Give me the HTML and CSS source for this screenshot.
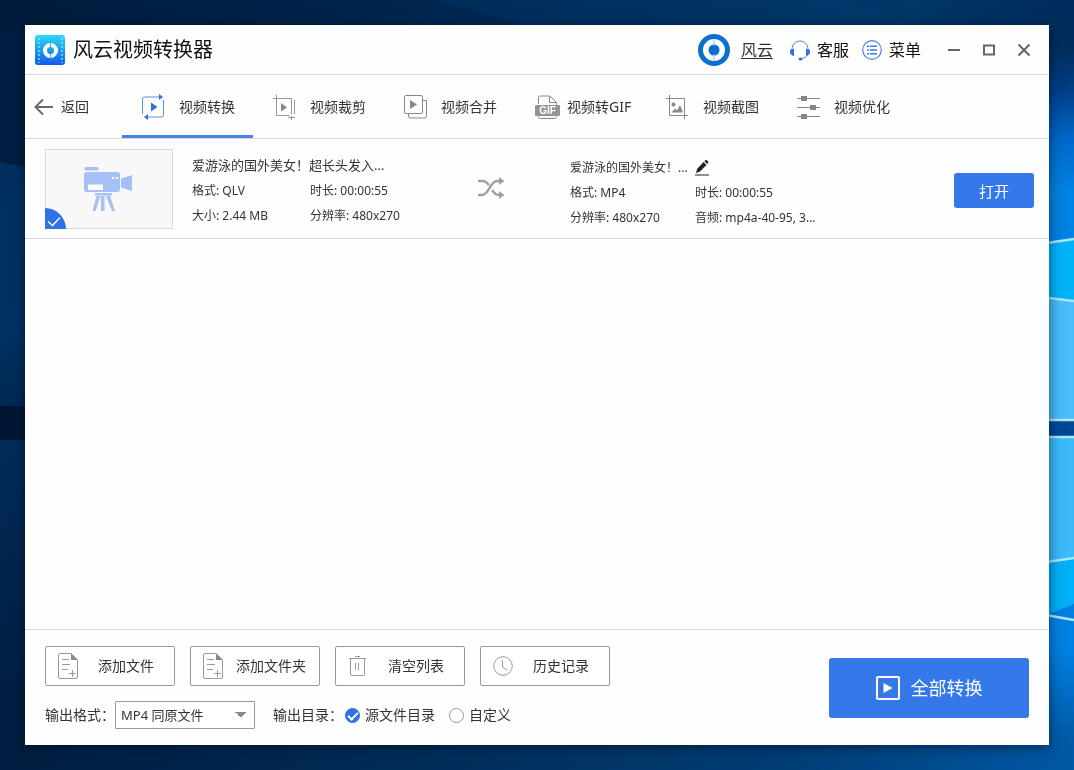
FILE: index.html
```html
<!DOCTYPE html>
<html lang="zh-CN">
<head>
<meta charset="utf-8">
<meta name="viewport" content="width=device-width, initial-scale=1">
<title>风云视频转换器</title>
<link rel="stylesheet" href="styles.css">
</head>
<body>
<svg class="wallpaper" viewBox="0 0 1074 770" preserveAspectRatio="none" aria-hidden="true">
  <defs>
    <linearGradient id="top" x1="0" x2="1" y1="0" y2="0"><stop offset="0" stop-color="#001b3b"/><stop offset=".3" stop-color="#00234a"/><stop offset=".85" stop-color="#003668"/><stop offset="1" stop-color="#002c5c"/></linearGradient>
    <linearGradient id="right" x1="0" x2="0" y1="0" y2="1"><stop offset="0" stop-color="#002c5c"/><stop offset=".06" stop-color="#002c5c"/><stop offset=".12" stop-color="#004088"/><stop offset=".18" stop-color="#0068c8"/><stop offset=".25" stop-color="#0083e2"/><stop offset=".84" stop-color="#0081e4"/><stop offset=".96" stop-color="#0059a6"/><stop offset="1" stop-color="#0059a6"/></linearGradient>
    <linearGradient id="left" x1="0" x2="0" y1="0" y2="1"><stop offset="0" stop-color="#003060"/><stop offset=".7" stop-color="#003264"/><stop offset="1" stop-color="#002852"/></linearGradient>
    <linearGradient id="low" x1="0" x2="0" y1="0" y2="1"><stop offset="0" stop-color="#002c59"/><stop offset="1" stop-color="#001f42"/></linearGradient>
    <linearGradient id="base" x1="0" x2="1" y1="0" y2="0"><stop offset="0" stop-color="#001d3f"/><stop offset=".4" stop-color="#002d59"/><stop offset=".75" stop-color="#003f78"/><stop offset="1" stop-color="#0059a6"/></linearGradient>
  </defs>
  <path fill="#001d3f" d="M0 0h1074v770H0z"/>
  <path fill="url(#left)" d="M0 162l40 8v236H0z"/>
  <path fill="#001733" d="M0 406h40v34H0z"/>
  <path fill="url(#low)" d="M0 440h40v250L0 682z"/>
  <path fill="url(#right)" d="M1040 0h34v770h-34z"/>
  <path fill="#00b3f8" d="M1040 244l34-5v62l-34-4z"/>
  <path fill="#48bdfa" d="M1040 297l34 4v119h-34z"/>
  <path fill="#004894" d="M1040 421h34v15h-34z"/>
  <path fill="#3cbafa" d="M1040 437h34v121l-34 5z"/>
  <path fill="#00b0f8" d="M1040 563l34-5v62l-34-5z"/>
  <path fill="#007fe0" d="M1049 614l25-10v16z"/>
  <path fill="none" stroke="#a9e8ff" stroke-width="2.500" d="M1040 244l34-5M1040 297l34 4M1040 420h34M1040 437h34M1040 563l34-5M1040 614l34 6"/>
  <path fill="url(#top)" d="M0 0h1074v30H0z"/>
  <path fill="#004078" opacity=".25" d="M435 0h420l60 26H530z"/>
  <path fill="url(#base)" d="M0 742h1074v28H0z"/>
</svg>

<main class="window">
  <header class="titlebar">
    <svg class="app-logo" viewBox="0 0 30 30" aria-hidden="true">
      <defs><linearGradient id="logo" x1="0" x2="0" y1="0" y2="1"><stop stop-color="#2fd7f6"/><stop offset=".5" stop-color="#1a9df2"/><stop offset="1" stop-color="#1557e8"/></linearGradient></defs>
      <rect width="30" height="30" rx="3" fill="url(#logo)"/>
      <path stroke="#8be6ff" stroke-width="2" stroke-dasharray="2 2" opacity=".7" d="M4 3v25M27 3v25"/>
      <circle cx="15.500" cy="15.500" r="5.500" fill="none" stroke="#fff" stroke-width="4"/>
      <path stroke="#3fa8f5" d="M15.500 7v5M15.500 19v5"/>
    </svg>
    <h1 class="app-title">风云视频转换器</h1>
    <a class="account" href="#">
      <svg class="icon-account" viewBox="0 0 32 32" aria-hidden="true"><circle cx="16" cy="16" r="13.500" fill="#fff" stroke="#0b6fd0" stroke-width="5"/><circle cx="16" cy="16" r="5.500" fill="#0b6fd0"/><path stroke="#8dbbe8" d="M16 5v7M16 20v7"/></svg>
      <span>风云</span>
    </a>
    <button class="title-button" type="button">
      <svg class="icon-small" viewBox="0 0 20 20" aria-hidden="true"><path d="M2 12V9a8 8 0 0 1 16 0v3c0 4-3 6-7 7" fill="none" stroke="#4a83ee"/><path d="M0 10q1-1 4-1v7Q0 15 0 12zM20 10q-1-1-4-1v7q4-1 4-4z" fill="#2f6fe8"/><ellipse cx="10.500" cy="19" rx="2" ry="1.500" fill="#2f6fe8"/></svg>
      客服
    </button>
    <button class="title-button" type="button">
      <svg class="icon-small" viewBox="0 0 20 20" aria-hidden="true"><circle cx="10" cy="10" r="9.300" fill="none" stroke="#4a83ee" stroke-width="1.200"/><path stroke="#3a78ee" stroke-width="1.500" d="M5 6.300h2M5 10h2M5 13.700h2M8 6.300h7M8 10h7M8 13.700h7"/></svg>
      菜单
    </button>
    <div class="window-controls">
      <button type="button" aria-label="最小化"><svg viewBox="0 0 14 14"><path d="M1 7h12"/></svg></button>
      <button type="button" aria-label="最大化"><svg viewBox="0 0 14 14"><path d="M2 2.500h10v9H2z"/></svg></button>
      <button type="button" aria-label="关闭"><svg viewBox="0 0 14 14"><path d="M1.500 1.500l11 11M12.500 1.500l-11 11"/></svg></button>
    </div>
  </header>

  <nav class="toolbar">
    <button class="back" type="button">
      <svg viewBox="0 0 20 18" aria-hidden="true"><path d="M19 9H2M9 1.500L1.500 9 9 16.500" fill="none" stroke="#6a6a6a" stroke-width="2"/></svg>
      返回
    </button>
    <a class="tab tab-active" href="#" aria-current="page">
      <svg class="tab-icon" viewBox="0 0 26 26" aria-hidden="true"><path d="M1.500 20V5q0-2 2-2H19M22.500 6v15q0 2-2 2H5" fill="none" stroke="#5d8feb"/><path d="M18 0l4 3-4 3zM7 20l-4 3 4 3zM10 8.500l6.500 4.500-6.500 4.500z" fill="#2f6fe8"/></svg>
      视频转换
    </a>
    <a class="tab" href="#">
      <svg class="tab-icon" viewBox="0 0 26 26" aria-hidden="true"><path d="M4.500 1v20.500h13M1 4.500h18.500V20M16 23.500h7M19.500 22v4M22.500 6v14" fill="none" stroke="#999"/><path d="M9 9l6 4.500-6 4z" fill="#888"/></svg>
      视频裁剪
    </a>
    <a class="tab" href="#">
      <svg class="tab-icon" viewBox="0 0 26 26" aria-hidden="true"><rect x="1.500" y="1.500" width="18" height="18" rx="1.500" fill="none" stroke="#888"/><path d="M19.500 6.500h4v16q0 1.500-1.500 1.500H7.500q-2 0-2-2v-2" fill="none" stroke="#888"/><path d="M7 6l7 4.500L7 15z" fill="#888"/></svg>
      视频合并
    </a>
    <a class="tab tab-gif" href="#">
      <svg class="tab-icon" viewBox="0 0 26 26" aria-hidden="true"><path d="M4.500 10V3.500Q4.500 2 6 2h10l6.500 6.500V11M15.500 2.500v6h7M4.500 22.500q0 2 2 2h14q2 0 2-2" fill="none" stroke="#888"/><rect x="1" y="11" width="25" height="11" rx="1" fill="#949494"/><text x="13.500" y="20" text-anchor="middle" class="gif-text">GIF</text></svg>
      视频转GIF
    </a>
    <a class="tab" href="#">
      <svg class="tab-icon" viewBox="0 0 26 26" aria-hidden="true"><path d="M4.500 1v20.500H23M1 4.500h18.500V25" fill="none" stroke="#888"/><circle cx="8.500" cy="10.500" r="2" fill="#888"/><path d="M6.500 18.500l3.500-4 2 2 3-5.500 3 7.500z" fill="#888"/></svg>
      视频截图
    </a>
    <a class="tab" href="#">
      <svg class="tab-icon" viewBox="0 0 26 26" aria-hidden="true"><path d="M1 4.500h23M1 13.500h23M1 22.500h23" stroke="#888"/><path d="M5 2h6v5H5zM14 11h6v5h-6zM5 20h6v5H5z" fill="#858585"/></svg>
      视频优化
    </a>
  </nav>

  <section class="file-list">
    <article class="file">
      <div class="thumb">
        <svg class="camera" viewBox="0 0 50 46" aria-hidden="true"><path d="M2 1h11q1.500 0 1.500 1.500T13 4.500H2Q.500 4.500.500 2.700T2 1zM3 6h30q3 0 3 3v14q0 3-3 3H3q-3 0-3-3V9q0-3 3-3zM37 12.500l11-3.500v16l-11-3.500zM11 27h17v2.500H11zM17 30h3.500v15H17zM12.500 30h4L11.500 45h-3zM22 30h4l5 15h-3z" fill="#a5c0f6"/><path d="M4 18.500h15V24H4zM28 11h2.200v2H28zM32 11h2.200v2H32z" fill="#fff"/></svg>
        <svg class="thumb-check" viewBox="0 0 21 21" aria-hidden="true"><path d="M0 0a21 21 0 0 1 21 21H0z" fill="#2f71e8"/><path d="M3 13.500l4.500 4L15 9.500" fill="none" stroke="#fff" stroke-width="1.300"/></svg>
      </div>
      <div class="info source">
        <h2>爱游泳的国外美女！超长头发入...</h2>
        <span>格式: QLV</span><span>时长: 00:00:55</span>
        <span>大小: 2.44 MB</span><span>分辨率: 480x270</span>
      </div>
      <svg class="shuffle" viewBox="0 0 28 22" aria-hidden="true"><path d="M1 4h5c3 0 4 2 6 4M15 13c3 4 4 5 8 5M1 18h4C12 18 13 4 20 4h3" fill="none" stroke="#a0a0a0" stroke-width="2.500"/><path d="M22 0l5.500 4-5.500 4zM22 14l5.500 4-5.500 4z" fill="#a0a0a0"/></svg>
      <div class="info target">
        <h3>爱游泳的国外美女！...</h3>
        <button class="edit" type="button" aria-label="重命名"><svg viewBox="0 0 14 16"><path d="M1 13l1.200-4.200L8.500 2l3 3L5 11.500zM9.300 1.300l1-1q1-.600 2 .300l.700.800q.700 1-.100 1.800l-.700.900zM0 14.500h14v1H0z" fill="#222"/></svg></button>
        <span>格式: MP4</span><span>时长: 00:00:55</span>
        <span>分辨率: 480x270</span><span>音频: mp4a-40-95, 3...</span>
      </div>
      <button class="open" type="button">打开</button>
    </article>
  </section>

  <footer class="footer">
    <div class="options">
      <div class="actions">
        <button class="action" type="button">
          <svg viewBox="0 0 20 26" aria-hidden="true"><path d="M13 .500H2Q.500.500.500 2v22q0 1.500 1.500 1.500h16q1.500 0 1.500-1.500V7M4 6.500h7M4 11.500h8M4 16.500h6M11 20.500h7M14.500 17v7" fill="none" stroke="#999"/><path d="M13 0l7 7h-7z" fill="#888"/></svg>
          <span>添加文件</span>
        </button>
        <button class="action" type="button">
          <svg viewBox="0 0 20 26" aria-hidden="true"><path d="M13 .500H2Q.500.500.500 2v22q0 1.500 1.500 1.500h16q1.500 0 1.500-1.500V7M4 6.500h7M4 11.500h8M4 16.500h6M11 20.500h7M14.500 17v7" fill="none" stroke="#999"/><path d="M13 0l7 7h-7z" fill="#888"/></svg>
          <span>添加文件夹</span>
        </button>
        <button class="action" type="button">
          <svg viewBox="0 0 20 26" aria-hidden="true"><path d="M1 5.500h17M7 3.500h5M2.500 5.500V21q0 1.500 1.500 1.500h11q1.500 0 1.500-1.500V5.500M7.500 10v7M10.500 10v7" fill="none" stroke="#999"/></svg>
          <span>清空列表</span>
        </button>
        <button class="action" type="button">
          <svg viewBox="0 0 20 26" aria-hidden="true"><circle cx="10" cy="13" r="9.300" fill="none" stroke="#999"/><path d="M9.500 7v7l4.500 3" fill="none" stroke="#999"/></svg>
          <span>历史记录</span>
        </button>
      </div>
      <div class="output">
        <label for="format">输出格式：</label>
        <select id="format"><option>MP4 同原文件</option></select>
        <fieldset class="destination">
          <legend>输出目录：</legend>
          <label><input type="radio" name="dir" checked>源文件目录</label>
          <label><input type="radio" name="dir">自定义</label>
        </fieldset>
      </div>
    </div>
    <button class="convert" type="button">
      <svg viewBox="0 0 24 24" aria-hidden="true"><rect x="1" y="1" width="22" height="22" rx="1" fill="none" stroke="#fff" stroke-width="2"/><path d="M7.500 7l9 5-9 5z" fill="#fff"/></svg>
      全部转换
    </button>
  </footer>
</main>
</body>
</html>
```
FILE: styles.css
```css
* {
  box-sizing: border-box;
}

body {
  margin: 0;
  min-height: 100vh;
  padding: 25px;
  display: flex;
  background: #001d3f;
  color: #333;
  font: 14px/20px "Noto Sans", "Noto Sans CJK SC", sans-serif;
}

button {
  padding: 0;
  border: 0;
  background: none;
  color: inherit;
  font: inherit;
  cursor: pointer;
}

a {
  color: inherit;
  text-decoration: none;
}

svg {
  display: block;
  flex: none;
}

h1, h2, h3 {
  margin: 0;
  font-weight: 400;
}

.wallpaper {
  position: fixed;
  inset: 0;
  z-index: -1;
  width: 100%;
  height: 100%;
}

.window {
  flex: 1;
  display: flex;
  flex-direction: column;
  min-width: 0;
  background: #fefefe;
  box-shadow: 0 2px 12px rgba(0, 10, 30, 0.6);
}

/* Title bar */
.titlebar {
  display: flex;
  align-items: center;
  height: 50px;
  padding: 0 18px 0 10px;
  border-bottom: 1px solid #d8d8d8;
  color: #111;
  font-size: 16px;
}

.app-logo {
  width: 30px;
  height: 30px;
}

.app-title {
  margin: 0 auto 0 8px;
  font-size: 20px;
  line-height: 30px;
}

.account {
  display: flex;
  align-items: center;
  gap: 11px;
  margin-right: 17px;
  color: #333;
  text-decoration: underline;
  text-underline-offset: 2px;
}

.icon-account {
  width: 32px;
  height: 32px;
}

.title-button {
  display: flex;
  align-items: center;
  gap: 7px;
  margin-right: 13px;
}

.icon-small {
  width: 20px;
  height: 20px;
  overflow: visible;
}

.window-controls {
  display: flex;
  gap: 21px;
  margin-left: 13px;
}

.window-controls svg {
  width: 14px;
  height: 14px;
  fill: none;
  stroke: #666;
  stroke-width: 2;
}

/* Tool tabs */
.toolbar {
  display: flex;
  height: 64px;
  border-bottom: 1px solid #d8d8d8;
}

.back {
  display: flex;
  align-items: center;
  gap: 7px;
  width: 97px;
  padding-left: 9px;
}

.back svg {
  width: 20px;
  height: 18px;
}

.tab {
  display: flex;
  align-items: center;
  gap: 12px;
  width: 131px;
  padding: 3px 0 0 19px;
  border-bottom: 3px solid transparent;
  white-space: nowrap;
}

.tab-active {
  border-bottom-color: #4a82ea;
}

.tab-gif {
  gap: 7px;
}

.tab-icon {
  width: 26px;
  height: 26px;
}

.gif-text {
  fill: #fff;
  font: 700 10px "Liberation Sans", sans-serif;
}

/* File list */
.file-list {
  flex: 1;
}

.file {
  display: flex;
  align-items: center;
  height: 100px;
  padding: 10px 15px 6px 20px;
  border-bottom: 1px solid #d8d8d8;
}

.thumb {
  position: relative;
  display: flex;
  align-items: center;
  align-self: flex-start;
  justify-content: center;
  width: 128px;
  height: 80px;
  border: 1px solid #d9d9d9;
  background: #f8f8f8;
}

.camera {
  width: 50px;
  height: 46px;
}

.thumb-check {
  position: absolute;
  left: -1px;
  bottom: -1px;
  width: 21px;
  height: 21px;
}

.info {
  display: grid;
  font-size: 12px;
  line-height: 25px;
  white-space: nowrap;
}

.source {
  grid-template-columns: 118px 167px;
  margin-left: 19px;
}

.source h2 {
  grid-column: span 2;
  font-size: 13px;
}

.shuffle {
  width: 28px;
  height: 22px;
  margin-bottom: 6px;
}

.target {
  grid-template-columns: 125px 160px;
  margin: 4px 0 0 65px;
}

.target h3 {
  font-size: 12px;
}

.edit {
  justify-self: start;
}

.edit svg {
  width: 14px;
  height: 16px;
}

.open {
  width: 80px;
  height: 35px;
  margin-left: auto;
  border-radius: 3px;
  background: #3478ea;
  color: #fff;
  font-size: 15px;
}

/* Footer */
.footer {
  display: flex;
  align-items: center;
  justify-content: space-between;
  padding: 16px 20px;
  border-top: 1px solid #d8d8d8;
}

.options {
  display: grid;
  gap: 15px;
}

.actions {
  display: flex;
  gap: 15px;
}

.action {
  display: flex;
  align-items: center;
  width: 130px;
  height: 40px;
  padding-left: 12px;
  border: 1px solid #999;
  border-radius: 2px;
  background: #fff;
}

.action svg {
  width: 20px;
  height: 26px;
}

.action span {
  flex: 1;
}

.output {
  display: flex;
  align-items: center;
}

.output select {
  width: 140px;
  height: 28px;
  padding: 0 5px;
  border: 1px solid #999;
  border-radius: 1px;
  appearance: none;
  background:
    linear-gradient(to bottom right, #888 50%, transparent 50%) 125px 10px / 6px 6px no-repeat,
    linear-gradient(to bottom left, #888 50%, transparent 50%) 119px 10px / 6px 6px no-repeat,
    #fff;
  color: #333;
  font: inherit;
  font-size: 13px;
}

.destination {
  display: flex;
  align-items: center;
  gap: 14px;
  margin: 0 0 0 18px;
  padding: 0;
  border: 0;
}

.destination legend {
  float: left;
  margin-right: -12px;
  padding: 0;
}

.destination label {
  display: flex;
  align-items: center;
  gap: 5px;
}

.destination input {
  width: 15px;
  height: 15px;
  margin: 0;
  border: 1px solid #999;
  border-radius: 50%;
  appearance: none;
  background: #fff;
}

.destination input:checked {
  display: grid;
  place-items: center;
  border-color: #2f71e8;
  background: #2f71e8;
}

.destination input:checked::before {
  content: "";
  width: 8px;
  height: 4px;
  border: solid #fff;
  border-width: 0 0 2px 2px;
  transform: rotate(-45deg);
}

.convert {
  display: flex;
  align-items: center;
  justify-content: center;
  gap: 11px;
  width: 200px;
  height: 60px;
  border-radius: 3px;
  background: #3478ea;
  color: #fff;
  font-size: 18px;
}

.convert svg {
  width: 24px;
  height: 24px;
}
```
